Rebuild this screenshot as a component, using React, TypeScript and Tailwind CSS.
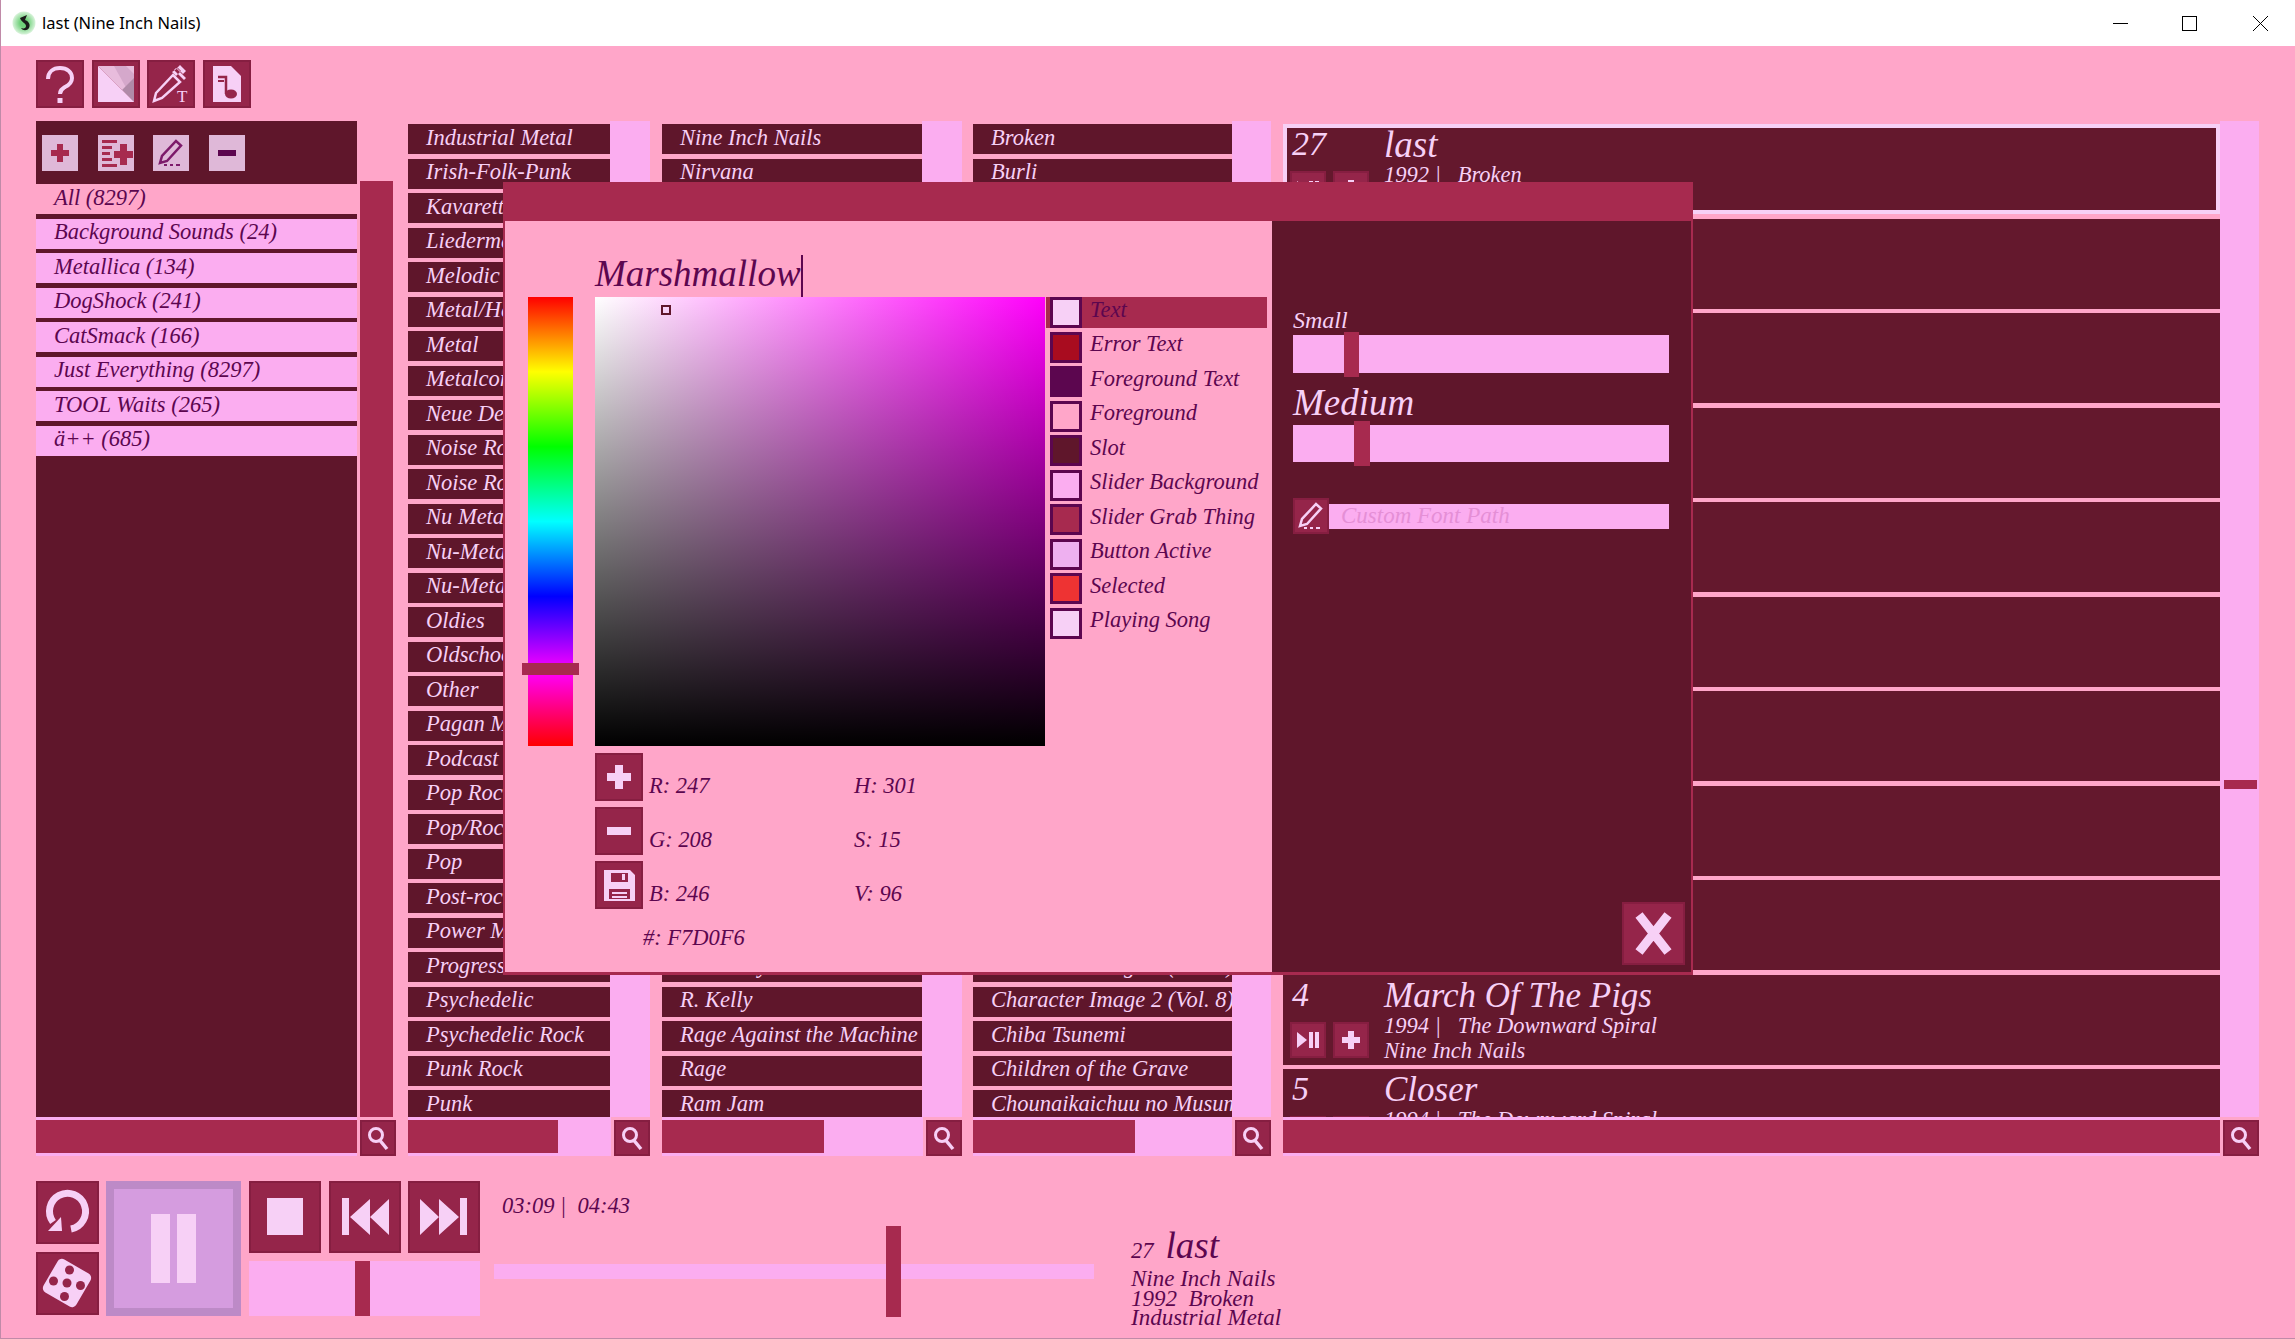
import React from 'react';

const genres = [
  'Industrial Metal', 'Irish-Folk-Punk', 'Kavarett', 'Liedermacher', 'Melodic', 'Metal/Hard Rock', 'Metal', 'Metalcore',
  'Neue Deutsche Härte', 'Noise Rock', 'Noise Rock', 'Nu Metal', 'Nu-Metal', 'Nu-Metal', 'Oldies', 'Oldschool', 'Other',
  'Pagan Metal', 'Podcast', 'Pop Rock', 'Pop/Rock', 'Pop', 'Post-rock', 'Power Metal', 'Progressive', 'Psychedelic',
  'Psychedelic Rock', 'Punk Rock', 'Punk',
];

// rows in the middle sit behind the dialog
const artists = ['Nine Inch Nails', 'Nirvana', ...Array(22).fill(''), 'Pink Floyd', 'R. Kelly', 'Rage Against the Machine', 'Rage', 'Ram Jam'];
const albums = ['Broken', 'Burli', ...Array(22).fill(''), 'Character Image 1 (Vol. 8)', 'Character Image 2 (Vol. 8)', 'Chiba Tsunemi', 'Children of the Grave', 'Chounaikaichuu no Musume'];

const playlists = ['Background Sounds (24)', 'Metallica (134)', 'DogShock (241)', 'CatSmack (166)', 'Just Everything (8297)', 'TOOL Waits (265)', 'ä++ (685)'];

const swatches = [
  { name: 'Text', cls: 'bg-[#f7d0f6]' },
  { name: 'Error Text', cls: 'bg-[#a90c1f]' },
  { name: 'Foreground Text', cls: 'bg-[#5c064f]' },
  { name: 'Foreground', cls: 'bg-[#ffa6c9]' },
  { name: 'Slot', cls: 'bg-[#5f162b]' },
  { name: 'Slider Background', cls: 'bg-[#fbadf0]' },
  { name: 'Slider Grab Thing', cls: 'bg-[#a72a4f]' },
  { name: 'Button Active', cls: 'bg-[#eeb0f0]' },
  { name: 'Selected', cls: 'bg-[#ee3333]' },
  { name: 'Playing Song', cls: 'bg-[#f7d0f6]' },
];

const L = '#f7d0f6';
const B = '#95254a';

const Plus = ({ color = L }: { color?: string }) => (
  <svg viewBox="0 0 48 48" className="w-full h-full">
    <path d="M20 12h8v8h8v8h-8v8h-8v-8h-8v-8h8z" fill={color} />
  </svg>
);

const Minus = ({ color = L }: { color?: string }) => (
  <svg viewBox="0 0 48 48" className="w-full h-full">
    <rect x="12" y="20" width="24" height="8" fill={color} />
  </svg>
);

const Search = () => (
  <svg viewBox="0 0 36 36" className="w-full h-full">
    <circle cx="16" cy="15" r="6.5" fill="none" stroke={L} strokeWidth="3" />
    <path d="M20 20.5l7 8.5" stroke={L} strokeWidth="3.5" fill="none" />
  </svg>
);

const Pencil = ({ color = L }: { color?: string }) => (
  <svg viewBox="0 0 36 36" className="w-full h-full">
    <path d="M7 28l2-7L23 6l5 4.500L14 26z" fill="none" stroke={color} strokeWidth="2.500" />
    <path d="M11 30h3M17 30h3M23 30h4" stroke={color} strokeWidth="2" />
  </svg>
);

const IconBtn = ({ className, children }: { className: string; children?: React.ReactNode }) => (
  <div className={`shrink-0 bg-[#95254a] shadow-[inset_0_0_0_2px_rgba(90,10,40,0.25)] ${className}`}>{children}</div>
);

const LightBtn = ({ children }: { children: React.ReactNode }) => (
  <div className="w-9 h-9 shrink-0 bg-[#dfb8d8]">{children}</div>
);

const SearchRow = ({ bar }: { bar: string }) => (
  <div className="flex gap-[3px] h-[39px]">
    <div className="flex-1 bg-[#fbadf0] pt-[3px]">
      <div className={`h-[33px] bg-[#a72a4f] ${bar}`} />
    </div>
    <div className="pt-[3px]">
      <IconBtn className="w-9 h-9">
        <Search />
      </IconBtn>
    </div>
  </div>
);

const ListColumn = ({ items, className, rowWidth, bar }: { items: string[]; className: string; rowWidth: string; bar: string }) => (
  <div className={`shrink-0 ${className}`}>
    <div className="flex h-[996px]">
      <div className={`pt-[3px] h-full overflow-hidden flex flex-col gap-[4.5px] ${rowWidth}`}>
        {items.map((name, i) => (
          <div key={i} className="h-[30px] shrink-0 bg-[#5f162b] pl-[18px] pb-[2px] flex items-center text-[#f7d0f6] text-[22.5px] leading-none whitespace-nowrap overflow-hidden">
            {name}
          </div>
        ))}
      </div>
      <div className="flex-1 bg-[#fbadf0]" />
    </div>
    <SearchRow bar={bar} />
  </div>
);

const SongRow = ({ num, title, year, album, artist, playing }: { num?: string; title?: string; year?: string; album?: string; artist?: string; playing?: boolean }) => (
  <div className={`h-[90px] shrink-0 bg-[#64182d] flex text-[#f7d0f6] ${playing ? 'shadow-[inset_0_0_0_4px_#f7d0f6]' : ''}`}>
    {title && (
      <>
        <div className="w-[101px] pl-[7px] shrink-0">
          <div className="h-[47px] pl-[2px] text-[34px] leading-[40px]">{num}</div>
          <div className="flex gap-[7px]">
            <IconBtn className="w-9 h-9">
              <svg viewBox="0 0 36 36" className="w-full h-full">
                <path d="M7 10l10 8-10 8zM19 10h4v16h-4zM25 10h4v16h-4z" fill={L} />
              </svg>
            </IconBtn>
            <IconBtn className="w-9 h-9">
              <Plus />
            </IconBtn>
          </div>
        </div>
        <div>
          <div className={`leading-[42px] whitespace-nowrap ${title === 'last' ? 'text-[37px]' : 'text-[35px]'}`}>{title}</div>
          <div className="text-[22.5px] leading-[25px] whitespace-pre -mt-[4px]">{`${year} |   ${album}`}</div>
          <div className="text-[22.5px] leading-[25px] whitespace-nowrap">{artist}</div>
        </div>
      </>
    )}
  </div>
);

const WindowControls = () => (
  <div className="flex items-center">
    <svg width="15" height="15" className="mr-[54px]">
      <path d="M0 7.500h15" stroke="#000" />
    </svg>
    <svg width="15" height="15" className="mr-[56px]">
      <rect x="0.500" y="0.500" width="14" height="14" fill="none" stroke="#000" />
    </svg>
    <svg width="15" height="15" className="mr-[27px]">
      <path d="M0 0l15 15M15 0L0 15" stroke="#000" />
    </svg>
  </div>
);

const Dialog = () => (
  <div className="absolute left-[502px] top-[182px] w-[1190px] h-[793px] bg-[#a72a4f] flex flex-col">
    <div className="h-[39px] shrink-0" />
    <div className="flex h-[751px] pl-[2px]">
      {/* colour editor */}
      <div className="w-[767px] shrink-0 bg-[#ffa6c9] flex text-[#5c064f]">
        <div className="relative ml-[23px] mt-[76px] w-[45px] h-[449px] bg-[linear-gradient(to_bottom,#f00,#ff0,#0f0,#0ff,#00f,#f0f,#f00)]">
          <div className="absolute -left-[6px] top-[366px] w-[57px] h-[12px] bg-[#a72a4f]" />
        </div>
        <div className="ml-[22px] flex-1">
          <div className="h-[76px] flex items-end">
            <span className="text-[37px] leading-[38px] pb-[4px] border-r-2 border-[#5c064f] h-[42px] whitespace-nowrap">Marshmallow</span>
          </div>
          <div className="flex">
            <div className="relative w-[450px] h-[449px] bg-[linear-gradient(to_top,#000,transparent),linear-gradient(to_right,#fff,#ff00fb)]">
              <div className="absolute left-[66px] top-[8px] w-[10px] h-[10px] border-2 border-[#5f162b]" />
            </div>
            <div className="ml-px flex flex-col gap-[3.5px] w-[221px]">
              {swatches.map((s, i) => (
                <div key={s.name} className={`h-[31px] flex items-center pl-[4px] text-[22.5px] ${i === 0 ? 'bg-[#a72a4f]' : ''}`}>
                  <div className={`w-[32px] h-[31px] border-[3px] border-[#5c064f] shrink-0 ${s.cls}`} />
                  <span className="ml-[8px] pb-[6px] leading-[28px] whitespace-nowrap">{s.name}</span>
                </div>
              ))}
            </div>
          </div>
          <div className="mt-[7px] flex flex-col gap-[6px] text-[22.5px]">
            <div className="flex items-end h-[48px]">
              <IconBtn className="w-12 h-12">
                <Plus />
              </IconBtn>
              <span className="ml-[6px] w-[205px] leading-[28px] pb-[1px]">R: 247</span>
              <span className="leading-[28px] pb-[1px]">H: 301</span>
            </div>
            <div className="flex items-end h-[48px]">
              <IconBtn className="w-12 h-12">
                <Minus />
              </IconBtn>
              <span className="ml-[6px] w-[205px] leading-[28px] pb-[1px]">G: 208</span>
              <span className="leading-[28px] pb-[1px]">S: 15</span>
            </div>
            <div className="flex items-end h-[48px]">
              <IconBtn className="w-12 h-12">
                <svg viewBox="0 0 48 48" className="w-full h-full">
                  <path fillRule="evenodd" fill={L} d="M9 9h26l5 5v26H9zM16 12v9h17v-9zM27 13h3v6h-3zM14 28v10h21V28zM17 31h15v2H17zM17 35h15v2H17z" />
                </svg>
              </IconBtn>
              <span className="ml-[6px] w-[205px] leading-[28px] pb-[1px]">B: 246</span>
              <span className="leading-[28px] pb-[1px]">V: 96</span>
            </div>
          </div>
          <div className="mt-[15px] ml-[48px] text-[22.5px] leading-[28px]">#: F7D0F6</div>
        </div>
      </div>
      {/* font settings */}
      <div className="w-[419px] shrink-0 bg-[#5f162b] pl-[21px] pr-[22px] flex flex-col text-[#f7d0f6]">
        <div className="mt-[84px] text-[24px] leading-[30px]">Small</div>
        <div className="relative h-[38px] bg-[#fbadf0]">
          <div className="absolute left-[51px] -top-[3px] w-[15px] h-[45px] bg-[#a72a4f]" />
        </div>
        <div className="mt-[8px] text-[37px] leading-[44px]">Medium</div>
        <div className="relative h-[37px] bg-[#fbadf0]">
          <div className="absolute left-[61px] -top-[4px] w-[16px] h-[45px] bg-[#a72a4f]" />
        </div>
        <div className="mt-[36px] flex items-center">
          <IconBtn className="w-9 h-9">
            <Pencil />
          </IconBtn>
          <div className="flex-1 h-[25px] bg-[#fbadf0] pl-[12px] text-[23px] leading-[24px] text-[#e58fd6]">Custom Font Path</div>
        </div>
        <IconBtn className="mt-auto mb-[7px] -mr-[16px] self-end w-[63px] h-[63px]">
          <svg viewBox="0 0 63 63" className="w-full h-full">
            <path d="M17 13l29 37M46 13L17 50" stroke={L} strokeWidth="9" fill="none" />
          </svg>
        </IconBtn>
      </div>
    </div>
  </div>
);

export default function App() {
  return (
    <div className="relative w-[2295px] h-[1339px] overflow-hidden bg-[#ffa6c9] flex flex-col italic font-['Liberation_Serif',serif] border-l border-b border-[#c08aa8]">
      {/* title bar */}
      <div className="h-[46px] -ml-px shrink-0 bg-white flex items-center justify-between not-italic font-['Noto_Sans',sans-serif] text-[16.5px] text-black">
        <div className="flex items-center pl-[12px]">
          <svg width="24" height="24" viewBox="0 0 24 24" className="mr-[6px]">
            <defs>
              <radialGradient id="glow">
                <stop offset="0.35" stopColor="#6fd07a" />
                <stop offset="1" stopColor="#d8f3da" />
              </radialGradient>
            </defs>
            <circle cx="12" cy="12" r="11.5" fill="url(#glow)" />
            <path d="M8 7l7-3-2 5c3 1 6 4 4 8-2 3-6 3-8 0 3 1 5 0 5-2 0-3-5-4-6-8z" fill="#1a1a1a" />
          </svg>
          <span>last (Nine Inch Nails)</span>
        </div>
        <WindowControls />
      </div>

      {/* toolbar */}
      <div className="flex gap-[7.5px] pl-[35px] pt-[14px] shrink-0">
        <IconBtn className="w-12 h-12">
          <svg viewBox="0 0 48 48" className="w-full h-full">
            <path d="M12 19c0-7 5-11 12-11s12 4 12 10c0 5-3 7-7 9-3 2-5 3-5 7" fill="none" stroke={L} strokeWidth="4" />
            <rect x="21.500" y="38" width="5" height="5" fill={L} />
          </svg>
        </IconBtn>
        <IconBtn className="w-12 h-12">
          <svg viewBox="0 0 48 48" className="w-full h-full">
            <path d="M6 6h36v36z" fill="#e8bcdc" />
            <path d="M22 6h12L42 14v28z" fill="#d5a8cb" />
            <path d="M42 18v24L30 30z" fill="#b08aa8" />
            <path d="M6 6l36 36H6z" fill={L} />
          </svg>
        </IconBtn>
        <IconBtn className="w-12 h-12">
          <svg viewBox="0 0 48 48" className="w-full h-full">
            <path d="M7 41l2-8 17-18 7 7-18 16z" fill="none" stroke={L} strokeWidth="2.500" />
            <path d="M25 12l4 4 5-5-3-3zM29 8l10 10-2 2-10-10zM33 5l6 6-3 3-6-6z" fill={L} />
            <text x="30" y="42" fontSize="17" fontStyle="normal" fill={L}>T</text>
          </svg>
        </IconBtn>
        <IconBtn className="w-12 h-12">
          <svg viewBox="0 0 48 48" className="w-full h-full">
            <path d="M10 6h18l10 10v26H10z" fill={L} />
            <path d="M15 17h8v17" fill="none" stroke={B} strokeWidth="2.500" />
            <path d="M15 21h6" stroke={B} strokeWidth="2" />
            <ellipse cx="28" cy="34" rx="6" ry="4.500" fill={B} />
          </svg>
        </IconBtn>
      </div>

      {/* library */}
      <div className="mt-[13px] pl-[35px] flex shrink-0">
        <div className="w-[360px] shrink-0">
          <div className="flex h-[996px]">
            <div className="w-[321px] bg-[#5f162b] flex flex-col text-[22.5px] text-[#5c064f]">
              <div className="h-[63px] pl-[6px] pt-[14px] flex gap-[19.5px]">
                <LightBtn>
                  <Plus color="#a72a4f" />
                </LightBtn>
                <LightBtn>
                  <svg viewBox="0 0 36 36" className="w-full h-full">
                    <path d="M4 5h15v3H4zM4 11h10v3H4zM4 17h8v3H4zM4 23h10v3H4zM4 29h15v3H4zM22 9h7v7h6v7h-6v7h-7v-7h-6v-7h6z" fill="#a72a4f" />
                  </svg>
                </LightBtn>
                <LightBtn>
                  <Pencil color="#7d1a6a" />
                </LightBtn>
                <LightBtn>
                  <svg viewBox="0 0 36 36" className="w-full h-full">
                    <rect x="9" y="15" width="18" height="6" fill="#5c064f" />
                  </svg>
                </LightBtn>
              </div>
              <div className="h-[30px] bg-[#ffa6c9] pl-[18px] pb-[3px] flex items-center">All (8297)</div>
              {playlists.map((name) => (
                <div key={name} className="h-[30px] mt-[4.5px] bg-[#fbadf0] pl-[18px] pb-[3px] flex items-center whitespace-nowrap">
                  {name}
                </div>
              ))}
            </div>
            <div className="ml-[3px] mt-[60px] w-[33px] bg-[#a72a4f]" />
          </div>
          <SearchRow bar="w-full" />
        </div>

        <ListColumn items={genres} className="ml-[12px] w-[242px]" rowWidth="w-[202px]" bar="w-[150px]" />
        <ListColumn items={artists} className="ml-[12px] w-[300px]" rowWidth="w-[260px]" bar="w-[162px]" />
        <ListColumn items={albums} className="ml-[11px] w-[298px]" rowWidth="w-[259px]" bar="w-[162px]" />

        <div className="ml-[12px] w-[976px] shrink-0">
          <div className="flex h-[996px]">
            <div className="w-[937px] pt-[3px] h-full overflow-hidden flex flex-col gap-[4.5px]">
              <SongRow num="27" title="last" year="1992" album="Broken" artist="Nine Inch Nails" playing />
              {Array.from({ length: 8 }, (_, i) => (
                <SongRow key={i} />
              ))}
              <SongRow num="4" title="March Of The Pigs" year="1994" album="The Downward Spiral" artist="Nine Inch Nails" />
              <SongRow num="5" title="Closer" year="1994" album="The Downward Spiral" artist="Nine Inch Nails" />
            </div>
            <div className="relative flex-1 bg-[#fbadf0]">
              <div className="absolute left-[4px] top-[659px] w-[33px] h-[9px] bg-[#a72a4f]" />
            </div>
          </div>
          <SearchRow bar="w-full" />
        </div>
      </div>

      {/* player */}
      <div className="mt-[25px] pl-[35px] flex text-[#5c064f]">
        <div className="w-[63px] flex flex-col gap-[8px]">
          <IconBtn className="w-[63px] h-[63px]">
            <svg viewBox="0 0 63 63" className="w-full h-full">
              <path d="M35 48A18 18 0 1 0 17 41" fill="none" stroke={L} strokeWidth="7" />
              <path d="M12 50h14l-1-14z" fill={L} />
            </svg>
          </IconBtn>
          <IconBtn className="w-[63px] h-[63px]">
            <svg viewBox="0 0 63 63" className="w-full h-full">
              <rect x="12" y="12" width="38" height="38" rx="5" transform="rotate(30 31 31)" fill={L} />
              <g fill={B}>
                <circle cx="31" cy="31" r="4.500" />
                <circle cx="33.500" cy="18" r="4.500" />
                <circle cx="17.500" cy="29" r="4.500" />
                <circle cx="44.500" cy="33.500" r="4.500" />
                <circle cx="28.500" cy="44.500" r="4.500" />
              </g>
            </svg>
          </IconBtn>
        </div>
        <div className="ml-[7px] w-[135px] h-[135px] bg-[#d59cdf] border-[8px] border-[#bd8ac7] flex items-center justify-center gap-[7px]">
          <div className="w-[19px] h-[69px] bg-[#f7d0f6]" />
          <div className="w-[19px] h-[69px] bg-[#f7d0f6]" />
        </div>
        <div className="ml-[8px] w-[231px]">
          <div className="flex gap-[7.5px]">
            <IconBtn className="w-[72px] h-[72px]">
              <svg viewBox="0 0 72 72" className="w-full h-full">
                <rect x="18" y="17" width="36" height="37" fill={L} />
              </svg>
            </IconBtn>
            <IconBtn className="w-[72px] h-[72px]">
              <svg viewBox="0 0 72 72" className="w-full h-full">
                <path d="M13 17h7v37h-7zM21 36l20-18v36zM41 36l19-18v36z" fill={L} />
              </svg>
            </IconBtn>
            <IconBtn className="w-[72px] h-[72px]">
              <svg viewBox="0 0 72 72" className="w-full h-full">
                <path d="M59 17h-7v37h7zM51 36L31 18v36zM31 36L12 18v36z" fill={L} />
              </svg>
            </IconBtn>
          </div>
          <div className="relative mt-[8px] h-[55px] bg-[#fbadf0]">
            <div className="absolute left-[106px] top-0 w-[15px] h-[55px] bg-[#a72a4f]" />
          </div>
        </div>
        <div className="ml-[14px] w-[600px] relative">
          <div className="pl-[8px] pt-[11px] text-[22.5px] leading-[28px] whitespace-pre">{'03:09 |  04:43'}</div>
          <div className="mt-[44px] h-[15px] bg-[#fbadf0]" />
          <div className="absolute left-[392px] top-[45px] w-[15px] h-[91px] bg-[#a72a4f]" />
        </div>
        <div className="ml-[37px] pt-[41px]">
          <div className="flex items-baseline h-[47px] leading-[48px]">
            <span className="text-[22.5px]">27</span>
            <span className="ml-[12px] text-[37px]">last</span>
          </div>
          <div className="text-[23px] leading-[19.5px] whitespace-pre">
            <div>Nine Inch Nails</div>
            <div>{'1992  Broken'}</div>
            <div>Industrial Metal</div>
          </div>
        </div>
      </div>

      <Dialog />
    </div>
  );
}
